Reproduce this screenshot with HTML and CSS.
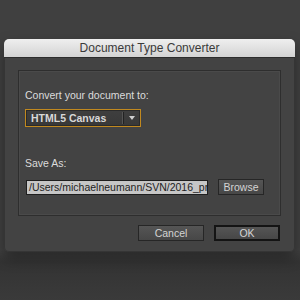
FILE: index.html
```html
<!DOCTYPE html>
<html lang="en">

<head>
    <meta charset="UTF-8">
    <title>Document Type Converter</title>
    <link rel="stylesheet" href="styles.css">
</head>

<body>
    <div class="dialog">
        <div class="dialog_title">Document Type Converter</div>
        <div class="dialog_body">
            <div class="group">
                <label class="label convert_label">Convert your document to:</label>
                <div class="select">
                    <span class="select_value">HTML5 Canvas</span>
                    <span class="select_arrow"></span>
                </div>
                <label class="label save_label">Save As:</label>
                <div class="save_row">
                    <div class="path_field">/Users/michaelneumann/SVN/2016_pr</div>
                    <button class="btn btn_browse">Browse</button>
                </div>
            </div>
            <div class="actions">
                <button class="btn btn_action">Cancel</button>
                <button class="btn btn_action btn_default">OK</button>
            </div>
        </div>
    </div>
</body>

</html>
```

FILE: styles.css
```css
/* Page */
body,
html {
    margin: 0;
    padding: 0;
    height: 100%;
    font-family: 'Liberation Sans', Arial, sans-serif;
}

body {
    background: linear-gradient(#404040 0, #404040 250px, #333333 262px, #3a3a3a 300px);
    overflow: hidden;
}

.dialog {
    width: 291px;
    margin: 39px 0 0 4px;
    border-radius: 5px;
    box-shadow: 0 6px 14px rgba(0, 0, 0, 0.35);
    background: #434343;
}

.dialog_title {
    height: 18px;
    line-height: 18px;
    text-align: center;
    font-size: 12px;
    color: #3a3a3a;
    background: linear-gradient(#efefef, #d3d3d3);
    border-radius: 5px 5px 0 0;
    border-bottom: 1px solid #2c2c2c;
}

.dialog_body {
    padding: 12px 13px 10px 13px;
    border: 1px solid #353535;
    border-top: none;
    border-radius: 0 0 5px 5px;
}

.group {
    height: 144px;
    border: 1px solid #2e2e2e;
    box-shadow: inset 0 0 0 1px #4a4a4a;
    padding: 0 6px;
    display: flex;
    flex-direction: column;
}

.label {
    font-size: 10.5px;
    color: #dcdcdc;
}

.convert_label {
    margin-top: 18px;
}

.select {
    width: 114px;
    height: 16px;
    margin-top: 8px;
    border: 1px solid #c1891f;
    box-shadow: inset 0 0 0 1px #2a2a2a;
    background: linear-gradient(#3f3f3f, #383838);
    display: flex;
    align-items: center;
}

.select_value {
    flex: 1;
    padding-left: 5px;
    font-size: 10.5px;
    font-weight: bold;
    color: #d8d8d8;
}

.select_arrow {
    width: 16px;
    height: 12px;
    border-left: 1px solid #222;
    box-shadow: -1px 0 0 #555;
    position: relative;
}

.select_arrow::after {
    content: "";
    position: absolute;
    left: 5px;
    top: 4px;
    border-left: 3px solid transparent;
    border-right: 3px solid transparent;
    border-top: 4px solid #d0d0d0;
}

.save_label {
    margin-top: 30px;
}

.save_row {
    display: flex;
    align-items: center;
    margin-top: 10px;
}

.path_field {
    width: 178px;
    height: 13px;
    line-height: 13px;
    margin-left: 1px;
    padding-left: 2px;
    border: 1px solid #1f1f1f;
    background: #c6c6c6;
    color: #1e1e1e;
    font-size: 10.5px;
    white-space: nowrap;
}

.btn {
    font-family: 'Liberation Sans', Arial, sans-serif;
    font-size: 10.5px;
    color: #d4d4d4;
    background: linear-gradient(#555555, #474747);
    border: 1px solid #262626;
    padding: 0;
    margin: 0;
}

.btn_browse {
    width: 46px;
    height: 16px;
    margin-left: 10px;
}

.actions {
    display: flex;
    justify-content: flex-end;
    gap: 10px;
    margin-top: 9px;
    padding-right: 1px;
}

.btn_action {
    width: 66px;
    height: 16px;
}

.btn_default {
    border: 2px solid #141414;
}
```
